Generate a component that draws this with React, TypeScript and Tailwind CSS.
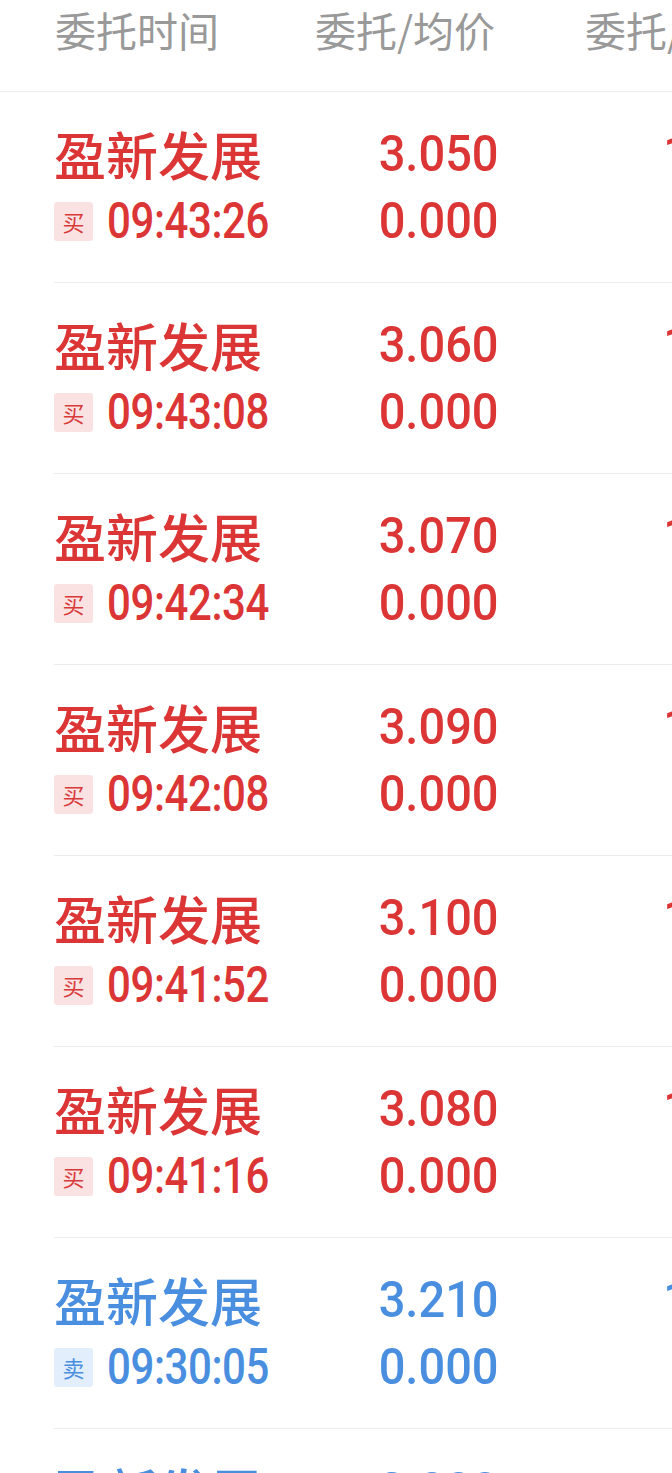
import React from 'react'

type Order = { name: string; price: string; avg: string; time: string; side: 'buy' | 'sell' }

const orders: Order[] = [
  { name: '盈新发展', price: '3.050', avg: '0.000', time: '09:43:26', side: 'buy' },
  { name: '盈新发展', price: '3.060', avg: '0.000', time: '09:43:08', side: 'buy' },
  { name: '盈新发展', price: '3.070', avg: '0.000', time: '09:42:34', side: 'buy' },
  { name: '盈新发展', price: '3.090', avg: '0.000', time: '09:42:08', side: 'buy' },
  { name: '盈新发展', price: '3.100', avg: '0.000', time: '09:41:52', side: 'buy' },
  { name: '盈新发展', price: '3.080', avg: '0.000', time: '09:41:16', side: 'buy' },
  { name: '盈新发展', price: '3.210', avg: '0.000', time: '09:30:05', side: 'sell' },
  { name: '盈新发展', price: '3.200', avg: '0.000', time: '09:30:02', side: 'sell' },
]

const cjk = { fontFamily: '"Noto Sans CJK SC", sans-serif' }
const num = { fontFamily: 'Roboto, "Noto Sans CJK SC", sans-serif' }

function OrderRow({ o }: { o: Order }) {
  const buy = o.side === 'buy'
  const color = buy ? 'text-[#db3535]' : 'text-[#4a8ee0]'
  return (
    <div className="ml-[54px] h-[191px] border-b border-[#ececec] flex items-start pt-[28px] whitespace-nowrap">
      <div className="w-[278px] shrink-0 flex flex-col">
        <div className={`${color} text-[52px] leading-[68px] font-medium`} style={cjk}>{o.name}</div>
        <div className="flex items-center gap-[14px] h-[66px]">
          <span
            className={`w-[39px] h-[39px] shrink-0 rounded-[3px] flex items-center justify-center text-[22px] ${buy ? 'bg-[#fbe2e2] text-[#d83a3a]' : 'bg-[#e2eefb] text-[#4a8ee0]'}`}
            style={cjk}
          >
            {buy ? '买' : '卖'}
          </span>
          {/* 窄体数字：Roboto 横向压缩 */}
          <span className={`${color} inline-block origin-left scale-x-[0.84] text-[50px] leading-[66px] tracking-[-0.5px] font-medium`} style={num}>{o.time}</span>
        </div>
      </div>
      <div className="w-[167px] shrink-0 flex flex-col items-end">
        <div className={`${color} inline-block origin-right scale-x-[0.94] text-[50px] leading-[68px] font-medium`} style={num}>{o.price}</div>
        <div className={`${color} inline-block origin-right scale-x-[0.94] text-[50px] leading-[66px] font-medium`} style={num}>{o.avg}</div>
      </div>
      <div className="pl-[164px] shrink-0 flex flex-col">
        <div className={`${color} text-[50px] leading-[68px] font-medium`} style={num}>100</div>
      </div>
    </div>
  )
}

export default function App() {
  return (
    <div className="w-[672px] h-[1473px] overflow-hidden bg-white">
      <div className="h-[92px] border-b border-[#ececec] flex items-start pl-[55px] text-[#999999] text-[41px] leading-[58px] whitespace-nowrap" style={cjk}>
        <div className="w-[260px] shrink-0">委托时间</div>
        <div className="w-[270px] shrink-0">委托/均价</div>
        <div className="shrink-0">委托/成交</div>
      </div>
      {orders.map((o, i) => (
        <OrderRow key={i} o={o} />
      ))}
    </div>
  )
}
